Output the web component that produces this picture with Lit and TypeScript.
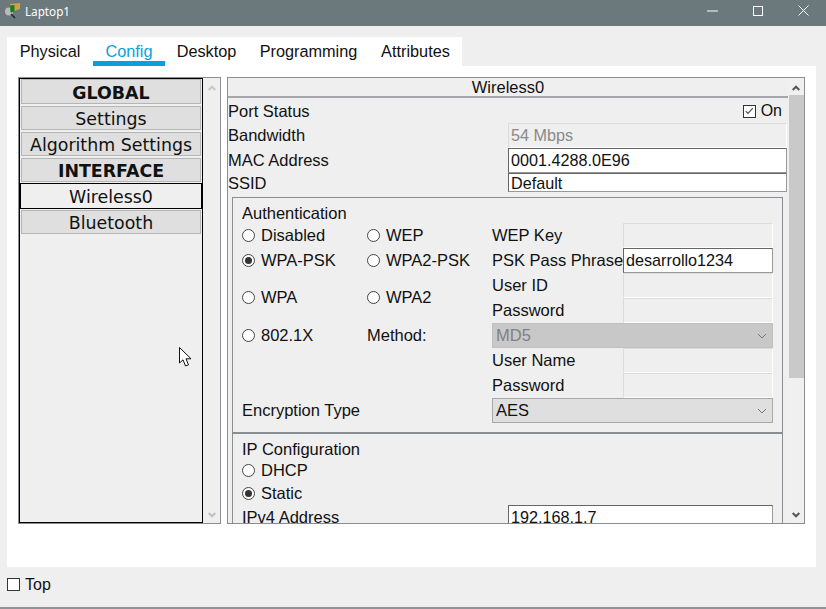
import { LitElement, html, css, svg } from "lit";
import { customElement } from "lit/decorators.js";

const tabs = ["Physical", "Config", "Desktop", "Programming", "Attributes"];
const menu = [
  { label: "GLOBAL", kind: "head" },
  { label: "Settings", kind: "" },
  { label: "Algorithm Settings", kind: "" },
  { label: "INTERFACE", kind: "head" },
  { label: "Wireless0", kind: "active" },
  { label: "Bluetooth", kind: "" },
];

const chevron = (up: boolean, color: string) => svg`
  <svg class="arrow" width="8" height="6" viewBox="0 0 8 6">
    <path d=${up ? "M.7 5 L4 1.7 L7.3 5" : "M.7 1 L4 4.3 L7.3 1"} fill="none" stroke=${color} stroke-width="2"/>
  </svg>`;

const selectArrow = svg`
  <svg width="10" height="6" viewBox="0 0 10 6">
    <path d="M1 1 L5 5 L9 1" fill="none" stroke="#777" stroke-width="1"/>
  </svg>`;

@customElement("app-root")
export class AppRoot extends LitElement {
  static styles = css`
    :host {
      display: block;
      width: 826px;
      height: 609px;
      overflow: hidden;
      position: relative;
      background: #efefef;
      font-family: "Liberation Sans", Arial, sans-serif;
      font-size: 16.5px;
      color: #111;
    }
    .titlebar {
      height: 26px;
      box-sizing: border-box;
      padding-bottom: 5px;
      background: #6b797d;
      display: flex;
      align-items: center;
      color: #fff;
    }
    .titlebar .logo { margin-left: 4px; }
    .titlebar .name {
      margin-left: 4px;
      font-family: "Noto Sans", sans-serif;
      font-size: 11.7px;
    }
    .controls {
      margin-left: auto;
      display: flex;
      align-items: center;
      padding-right: 17px;
      gap: 35px;
    }
    .controls svg { display: block; }
    .tabs {
      display: grid;
      grid-template-columns: 86px 72px 83px 121px 93px;
      width: 455px;
      height: 29px;
      margin: 11px 0 0 7px;
      background: #fff;
    }
    .tab {
      display: flex;
      align-items: center;
      justify-content: center;
      font-size: 16.3px;
      white-space: nowrap;
    }
    .tab.on {
      color: #0a9fdc;
      box-shadow: inset 0 -5px #0a9fdc;
    }
    .sheet {
      width: 809px;
      height: 501px;
      margin-left: 7px;
      background: #fff;
      box-sizing: border-box;
      padding: 11px 11px 0 11px;
      display: flex;
      gap: 6px;
      align-items: flex-start;
    }
    .left {
      width: 203px;
      height: 447px;
      box-sizing: border-box;
      border: 1px solid #8a8d91;
      background: #efefef;
      display: flex;
    }
    .list {
      width: 184px;
      box-sizing: border-box;
      border: 1px solid #000;
      padding: 0 1px;
      flex: none;
    }
    .item {
      height: 24px;
      margin-top: 2px;
      box-sizing: border-box;
      border: 1px solid #b5b5b5;
      background: #dfdfdf;
      display: flex;
      align-items: center;
      justify-content: center;
      font-family: "DejaVu Sans", Verdana, sans-serif;
      font-size: 17.4px;
      padding-top: 2px;
      white-space: nowrap;
    }
    .item.head { font-weight: bold; }
    .item:first-child { height: 25px; margin-top: 0; padding-top: 3px; }
    .item.active {
      height: 26px;
      margin: 1px -1px;
      border: 1px solid #000;
      background: #efefef;
    }
    .item.active + .item { margin-top: 0; }
    .vscroll {
      width: 17px;
      flex: none;
      display: flex;
      flex-direction: column;
      align-items: center;
      background: #efefef;
    }
    .vscroll .arrow { display: block; }
    .vscroll .up { margin-top: 7px; height: 11px; }
    .vscroll .gap { flex: 1; }
    .vscroll .down { height: 11px; }
    .right {
      width: 578px;
      height: 447px;
      box-sizing: border-box;
      border: 1px solid #8a8d91;
      background: #efefef;
      display: flex;
    }
    .view {
      width: 560px;
      flex: none;
      overflow: hidden;
      position: relative;
    }
    .panel-title {
      height: 20px;
      box-sizing: border-box;
      border-bottom: 2px solid #a4a6a9;
      text-align: center;
      line-height: 19px;
    }
    .general {
      display: grid;
      grid-template-columns: 280px 279px;
      grid-template-rows: 25px 25px 25px 19px;
    }
    .lbl {
      display: flex;
      align-items: center;
      white-space: nowrap;
    }
    .status {
      grid-column: 1 / 3;
      display: flex;
      align-items: center;
      justify-content: space-between;
      padding: 1px 5px 0 0;
    }
    .check {
      display: flex;
      align-items: center;
      gap: 5px;
      font-size: 16px;
    }
    .box {
      width: 13px;
      height: 13px;
      box-sizing: border-box;
      border: 1px solid #333;
      background: #fff;
      display: block;
      flex: none;
    }
    .field {
      box-sizing: border-box;
      display: flex;
      align-items: center;
      padding-left: 2px;
      border: 1px solid #666;
      border-right-color: #999;
      border-bottom-color: #999;
      background: #fff;
      font-size: 16.2px;
      white-space: nowrap;
      overflow: hidden;
    }
    .field.off {
      background: #efefef;
      border: 1px solid #fff;
      border-top-color: #dcdcdc;
      border-left-color: #dcdcdc;
      color: #8a8a8a;
    }
    .general .low { padding-top: 1px; }
    .group {
      margin: 5px 5px 0 4px;
      border: 1px solid #8a8d91;
      border-bottom: none;
      padding: 0 9px;
    }
    .group-title {
      height: 25px;
      box-sizing: border-box;
      padding-top: 5px;
      display: flex;
      align-items: center;
    }
    .auth {
      display: grid;
      grid-template-columns: 125px 125px 131px 150px;
      grid-template-rows: repeat(8, 25px);
      padding-bottom: 9px;
    }
    .radio {
      display: flex;
      align-items: center;
      gap: 6px;
      white-space: nowrap;
    }
    .dot {
      width: 13px;
      height: 13px;
      box-sizing: border-box;
      border: 1px solid #444;
      border-radius: 50%;
      background: #fff;
      display: flex;
      align-items: center;
      justify-content: center;
      flex: none;
    }
    .dot.on::after {
      content: "";
      width: 7px;
      height: 7px;
      border-radius: 50%;
      background: #333;
    }
    .tall { grid-row: span 2; padding-bottom: 2px; }
    .select {
      grid-column: 3 / 5;
      box-sizing: border-box;
      border: 1px solid #a8a8a8;
      background: #dfdfdf;
      display: flex;
      align-items: center;
      justify-content: space-between;
      padding: 0 5px 0 3px;
    }
    .select.off {
      background: #c8c8c8;
      border-color: #c0c0c0;
      color: #808080;
    }
    .enc { grid-column: 1 / 3; }
    .ip { border-top: 2px solid #8a8d91; margin-top: 0; }
    .ip .group-title { height: 25px; padding-top: 6px; }
    .ip .radio { height: 23px; }
    .ip-row {
      display: grid;
      grid-template-columns: 266px 265px;
      height: 25px;
    }
    .sbar {
      width: 16px;
      flex: none;
      display: flex;
      flex-direction: column;
      align-items: center;
      background: #f0f0f0;
    }
    .sbar .up { height: 17px; padding-top: 7px; box-sizing: border-box; }
    .sbar .up svg, .sbar .down svg { display: block; }
    .sbar .thumb {
      width: 15px;
      height: 283px;
      flex: none;
      background: #c9c9c9;
    }
    .sbar .rest { flex: 1; }
    .sbar .down { height: 11px; }
    .bottom {
      height: 42px;
      box-sizing: border-box;
      display: flex;
      align-items: center;
      gap: 5px;
      padding: 0 0 5px 7px;
      border-bottom: 2px solid #8f9396;
      font-size: 16px;
    }
    .cursor {
      position: absolute;
      left: 179px;
      top: 347px;
    }
  `;

  radio(label: string, on = false, cls = "") {
    return html`<div class="radio ${cls}"><span class="dot ${on ? "on" : ""}"></span>${label}</div>`;
  }

  render() {
    return html`
      <div class="titlebar">
        <svg class="logo" width="17" height="16" viewBox="0 2 17 16">
          <circle cx="5" cy="10.5" r="4" fill="#b8bcbc"/>
          <path d="M7 13 L11 17" stroke="#222" stroke-width="1.5"/>
          <path d="M6 3 L16 2 L16 8 L9 10.5 L6 9 Z" fill="#c9a24a"/>
          <path d="M6 4.5 L10.5 4 L10.5 10.5 L6.5 11.5 Z" fill="#1a7a2c"/>
        </svg>
        <span class="name">Laptop1</span>
        <div class="controls">
          <svg width="11" height="2" viewBox="0 0 11 2"><path d="M0 1 H11" stroke="#fff"/></svg>
          <svg width="10" height="10" viewBox="0 0 10 10"><rect x=".5" y=".5" width="9" height="9" fill="none" stroke="#fff"/></svg>
          <svg width="11" height="11" viewBox="0 0 11 11"><path d="M.5 .5 L10.5 10.5 M10.5 .5 L.5 10.5" stroke="#fff"/></svg>
        </div>
      </div>

      <div class="tabs">
        ${tabs.map((t) => html`<div class="tab ${t === "Config" ? "on" : ""}">${t}</div>`)}
      </div>

      <div class="sheet">
        <div class="left">
          <div class="list">
            ${menu.map((m) => html`<div class="item ${m.kind}">${m.label}</div>`)}
          </div>
          <div class="vscroll">
            <div class="up">${chevron(true, "#c8c8c8")}</div>
            <div class="gap"></div>
            <div class="down">${chevron(false, "#c0c0c0")}</div>
          </div>
        </div>

        <div class="right">
          <div class="view">
            <div class="panel-title">Wireless0</div>
            <div class="general">
              <div class="status">
                <span>Port Status</span>
                <span class="check">
                  <svg class="box" width="13" height="13" viewBox="0 0 13 13">
                    <path d="M2 6 L4.7 8.8 L10.5 2.5" fill="none" stroke="#555" stroke-width="1.5"/>
                  </svg>
                  On
                </span>
              </div>
              <div class="lbl">Bandwidth</div>
              <div class="field off">54 Mbps</div>
              <div class="lbl">MAC Address</div>
              <div class="field">0001.4288.0E96</div>
              <div class="lbl low">SSID</div>
              <div class="field low">Default</div>
            </div>

            <div class="group">
              <div class="group-title">Authentication</div>
              <div class="auth">
                ${this.radio("Disabled")}
                ${this.radio("WEP")}
                <div class="lbl">WEP Key</div>
                <div class="field off"></div>

                ${this.radio("WPA-PSK", true)}
                ${this.radio("WPA2-PSK")}
                <div class="lbl">PSK Pass Phrase</div>
                <div class="field">desarrollo1234</div>

                ${this.radio("WPA", false, "tall")}
                ${this.radio("WPA2", false, "tall")}
                <div class="lbl">User ID</div>
                <div class="field off"></div>
                <div class="lbl">Password</div>
                <div class="field off"></div>

                ${this.radio("802.1X")}
                <div class="lbl">Method:</div>
                <div class="select off">MD5 ${selectArrow}</div>

                <div></div>
                <div></div>
                <div class="lbl">User Name</div>
                <div class="field off"></div>

                <div></div>
                <div></div>
                <div class="lbl">Password</div>
                <div class="field off"></div>

                <div class="lbl enc">Encryption Type</div>
                <div class="select">AES ${selectArrow}</div>
              </div>
            </div>

            <div class="group ip">
              <div class="group-title">IP Configuration</div>
              ${this.radio("DHCP")}
              ${this.radio("Static", true)}
              <div class="ip-row">
                <div class="lbl">IPv4 Address</div>
                <div class="field">192.168.1.7</div>
              </div>
            </div>
          </div>

          <div class="sbar">
            <div class="up">${chevron(true, "#555")}</div>
            <div class="thumb"></div>
            <div class="rest"></div>
            <div class="down">${chevron(false, "#555")}</div>
          </div>
        </div>
      </div>

      <div class="bottom">
        <span class="box"></span>
        <span>Top</span>
      </div>

      <svg class="cursor" width="14" height="21" viewBox="0 0 14 21">
        <path d="M.5 .5 V16 L4 12.8 L6.5 19 L9.5 17.8 L7 11.8 H12 Z" fill="#fff" stroke="#111"/>
      </svg>
    `;
  }
}
